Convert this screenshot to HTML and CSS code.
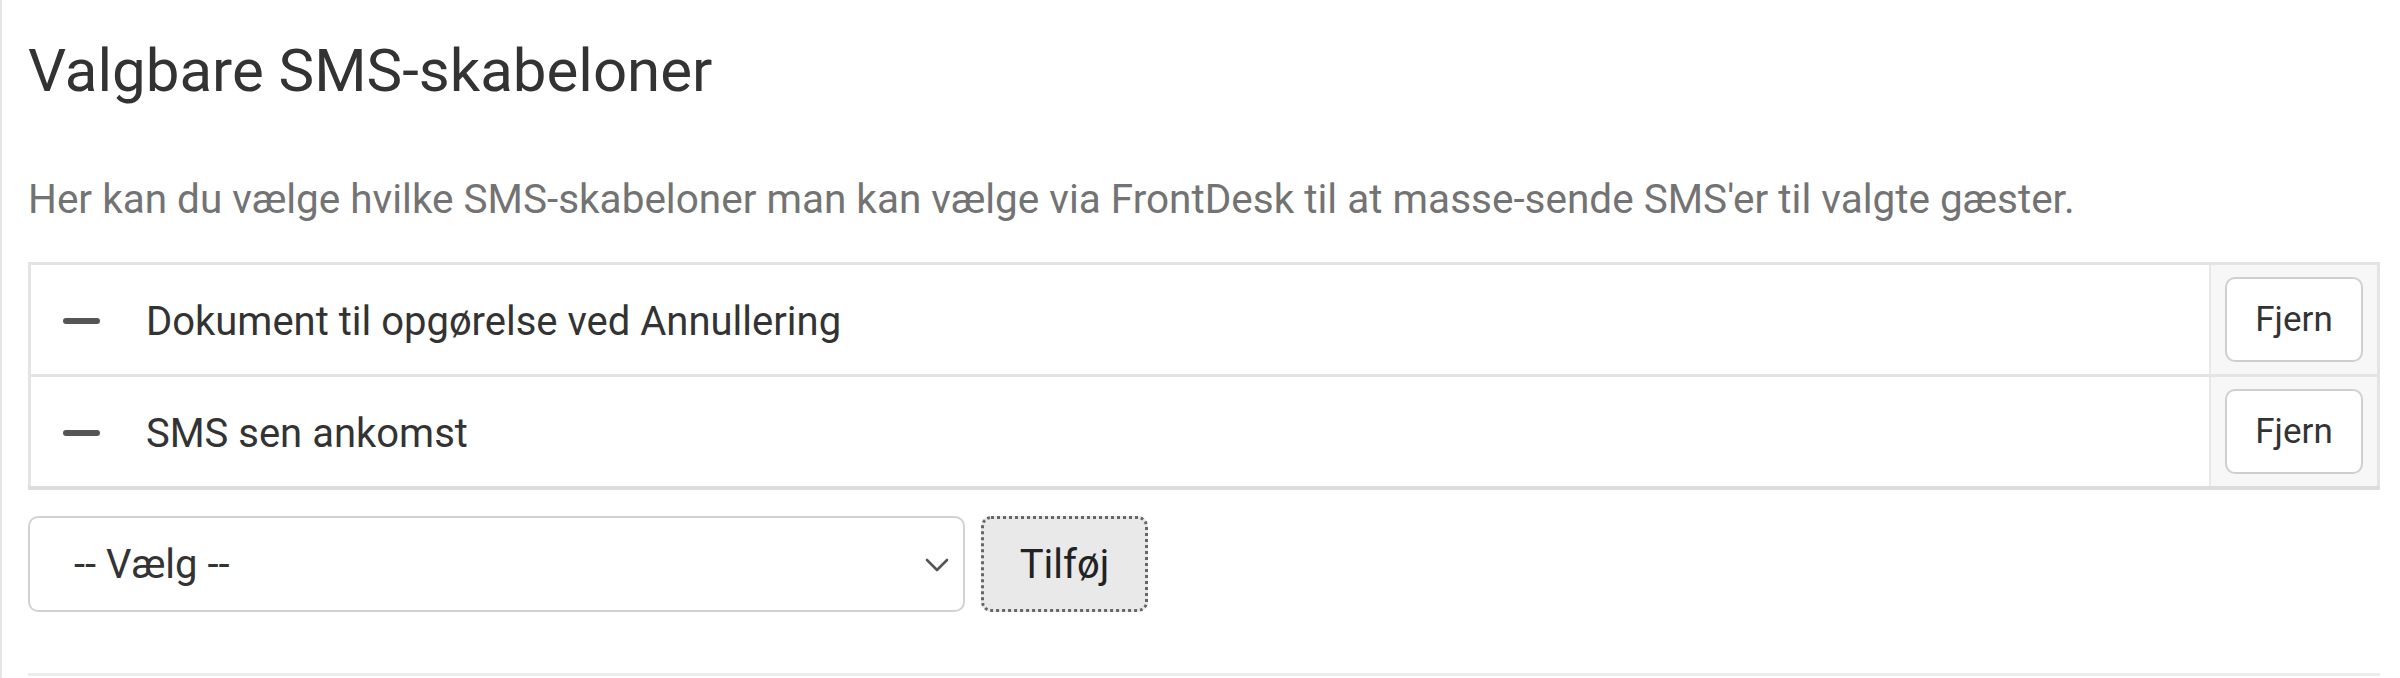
FILE: index.html
```html
<!DOCTYPE html>
<html lang="da">
<head>
    <meta charset="UTF-8">
    <title>Valgbare SMS-skabeloner</title>
    <link rel="stylesheet" href="styles.css">
</head>
<body>
    <div class="panel">
        <h2>Valgbare SMS-skabeloner</h2>
        <p class="intro">Her kan du vælge hvilke SMS-skabeloner man kan vælge via FrontDesk til at masse-sende SMS'er til valgte gæster.</p>

        <!-- Selected templates -->
        <table class="template-list">
            <tr>
                <td class="name">
                    <span class="minus"></span>
                    <span>Dokument til opgørelse ved Annullering</span>
                </td>
                <td class="action"><button class="btn">Fjern</button></td>
            </tr>
            <tr>
                <td class="name">
                    <span class="minus"></span>
                    <span>SMS sen ankomst</span>
                </td>
                <td class="action"><button class="btn">Fjern</button></td>
            </tr>
        </table>

        <div class="add-row">
            <div class="select-wrap">
                <select class="select">
                    <option>-- Vælg --</option>
                    <option>Dokument til opgørelse ved Annullering</option>
                    <option>SMS sen ankomst</option>
                </select>
                <svg class="chevron" width="24" height="14" viewBox="0 0 24 14">
                    <path d="M2 2 L12 12 L22 2" fill="none" stroke="#555" stroke-width="2.6" stroke-linecap="round" stroke-linejoin="round"/>
                </svg>
            </div>
            <button class="btn add">Tilføj</button>
        </div>

        <hr class="divider">
    </div>
</body>
</html>
```

FILE: styles.css
```css
body {
    margin: 0;
    background-color: #fff;
    font-family: Roboto, "Liberation Sans", Arial, sans-serif;
    color: #333;
}
.panel {
    border-left: 2px solid #e6e6e6;
    padding: 38px 20px 0 26px;
    min-height: 678px;
    box-sizing: border-box;
}
h2 {
    margin: 0 0 67px;
    font-size: 60px;
    line-height: 66px;
    font-weight: 400;
    color: #333;
}
.intro {
    margin: 0 0 34px;
    font-size: 40.5px;
    line-height: 57px;
    color: #737373;
}
.template-list {
    width: 100%;
    border-collapse: collapse;
    border: 3px solid #e4e4e4;
    border-bottom-width: 4px;
    border-bottom-color: #dcdcdc;
}
.template-list td {
    height: 109px;
    padding: 0;
    border-top: 3px solid #e4e4e4;
    vertical-align: middle;
}
.template-list .name {
    font-size: 40px;
    color: #333;
}
.template-list .name span {
    vertical-align: middle;
}
.minus {
    display: inline-block;
    width: 37px;
    height: 6px;
    margin: 0 36px 0 32px;
    border-radius: 3px;
    background-color: #555;
}
.template-list .action {
    width: 138px;
    padding: 0 14px;
    background-color: #f7f7f7;
    border-left: 2px solid #e8e8e8;
}
.btn {
    font-family: Roboto, "Liberation Sans", Arial, sans-serif;
    width: 138px;
    height: 85px;
    font-size: 35px;
    color: #333;
    background-color: #fff;
    border: 2px solid #cfcfcf;
    border-radius: 10px;
    cursor: pointer;
}
.add-row {
    display: flex;
    gap: 16px;
    margin-top: 26px;
}
.select-wrap {
    position: relative;
    width: 937px;
    height: 96px;
}
.select {
    appearance: none;
    -webkit-appearance: none;
    width: 100%;
    height: 100%;
    padding: 0 60px 0 44px;
    font-family: Roboto, "Liberation Sans", Arial, sans-serif;
    font-size: 40px;
    color: #333;
    background-color: #fff;
    border: 2px solid #d2d2d2;
    border-radius: 10px;
}
.chevron {
    position: absolute;
    right: 16px;
    top: 42px;
    pointer-events: none;
}
.btn.add {
    width: 167px;
    height: 96px;
    font-size: 40px;
    color: #222;
    background-color: #e9e9e9;
    border: 3px dotted #666;
}
.divider {
    margin: 61px 0 0;
    border: 0;
    border-top: 3px solid #ececec;
}
```
